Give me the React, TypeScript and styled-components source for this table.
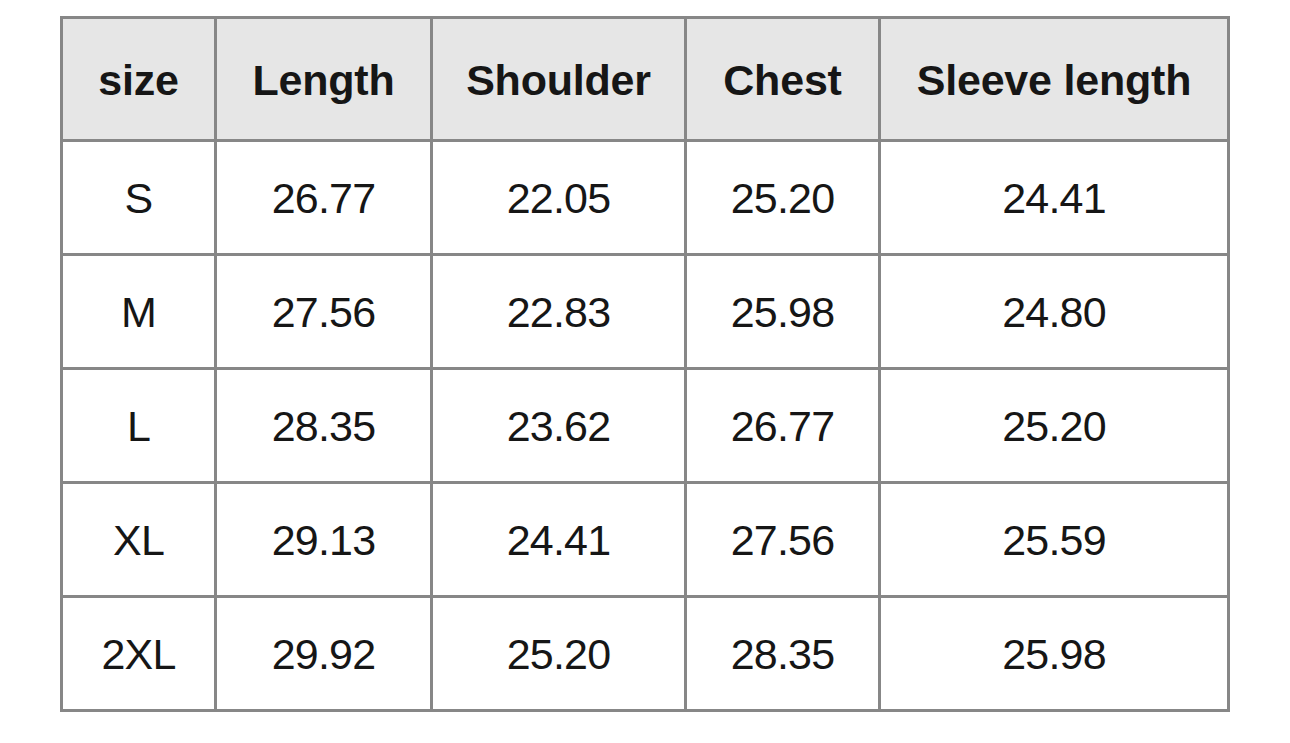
import React from "react"
import styled, { createGlobalStyle } from "styled-components"

const GlobalStyle = createGlobalStyle`
  html, body {
    margin: 0;
    padding: 0;
    background: #fff;
  }
  body {
    font-family: "Liberation Sans", Arial, sans-serif;
    color: #161616;
  }
`

const Page = styled.div`
  padding: 16px 0 0 60px;
`

const Grid = styled.div`
  display: grid;
  grid-template-columns: 151px 213px 251px 191px 346px;
  grid-template-rows: 120px repeat(5, 111px);
  gap: 3px;
  padding: 3px;
  width: max-content;
  background: #878787;
`

const Cell = styled.div<{ $head?: boolean }>`
  display: flex;
  align-items: center;
  justify-content: center;
  background: ${(p) => (p.$head ? "#e6e6e6" : "#fff")};
  font-size: 43px;
  font-weight: ${(p) => (p.$head ? 700 : 400)};
  letter-spacing: ${(p) => (p.$head ? "-0.2px" : "-0.8px")};
  padding-top: 2px;
`

const headers = ["size", "Length", "Shoulder", "Chest", "Sleeve length"]

const rows = [
  ["S", "26.77", "22.05", "25.20", "24.41"],
  ["M", "27.56", "22.83", "25.98", "24.80"],
  ["L", "28.35", "23.62", "26.77", "25.20"],
  ["XL", "29.13", "24.41", "27.56", "25.59"],
  ["2XL", "29.92", "25.20", "28.35", "25.98"],
]

export default function App() {
  return (
    <>
      <GlobalStyle />
      <Page>
        <Grid>
          {headers.map((h) => (
            <Cell $head key={h}>
              {h}
            </Cell>
          ))}
          {rows.map((r) =>
            r.map((v, i) => <Cell key={r[0] + i}>{v}</Cell>)
          )}
        </Grid>
      </Page>
    </>
  )
}
